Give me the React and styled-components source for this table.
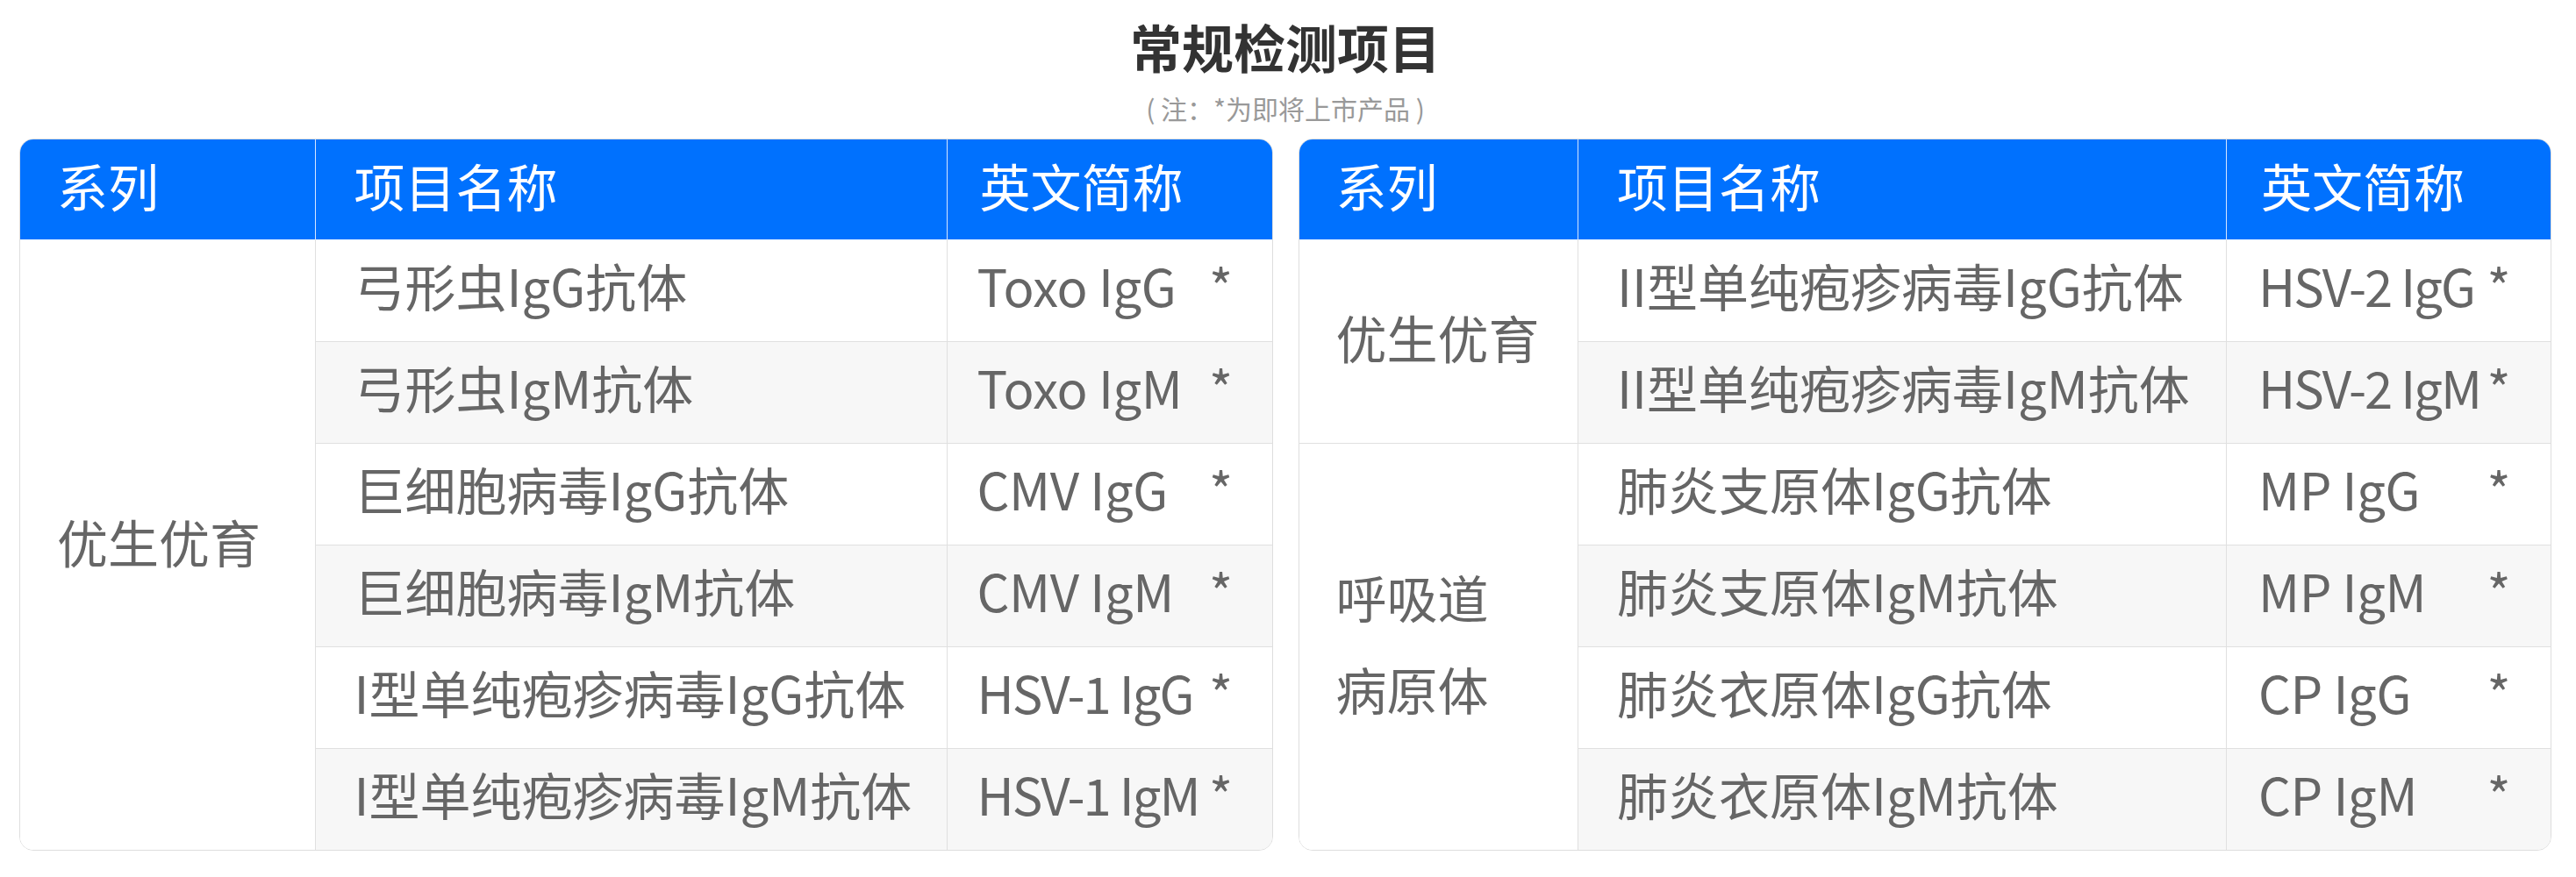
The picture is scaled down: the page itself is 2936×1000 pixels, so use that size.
import React from "react";
import styled, { createGlobalStyle } from "styled-components";

const GlobalStyle = createGlobalStyle`
  html, body {
    margin: 0;
    padding: 0;
    background: #ffffff;
  }
  body {
    font-family: "Noto Sans CJK SC", "Noto Sans", sans-serif;
  }
`;

const Page = styled.div`
  width: 2936px;
  padding: 24px 28px 0 22px;
  box-sizing: border-box;
`;

const Title = styled.h1`
  margin: 0;
  text-align: center;
  font-size: 59px;
  line-height: 58px;
  font-weight: 700;
  color: #333333;
`;

const Note = styled.p`
  margin: 26px 0 0;
  text-align: center;
  font-size: 30px;
  line-height: 30px;
  color: #999999;
`;

const Tables = styled.div`
  margin-top: 20px;
  display: grid;
  grid-template-columns: 1fr 1fr;
  column-gap: 29px;
  align-items: start;
`;

const Card = styled.div`
  border: 1px solid #dedede;
  border-radius: 16px;
  overflow: hidden;
  background: #ffffff;
`;

const Table = styled.table`
  width: 100%;
  border-collapse: collapse;
  table-layout: fixed;
`;

const HeadCell = styled.th`
  height: 114px;
  box-sizing: border-box;
  padding: 0 0 10px ${(p) => p.$pl}px;
  background: #0071fe;
  color: #ffffff;
  font-size: 58px;
  font-weight: 400;
  text-align: left;
  vertical-align: middle;
  border-left: ${(p) => (p.$first ? "none" : "1px solid #d6e6ff")};
`;

const Row = styled.tr`
  background: ${(p) => (p.$alt ? "#f7f7f7" : "#ffffff")};
`;

const Cell = styled.td`
  height: 116px;
  box-sizing: border-box;
  padding: 0 0 12px ${(p) => p.$pl}px;
  font-size: 58px;
  color: #666666;
  vertical-align: middle;
  white-space: nowrap;
  border-top: ${(p) => (p.$top ? "1px solid #e0e0e0" : "none")};
  border-left: ${(p) => (p.$first ? "none" : "1px solid #e0e0e0")};
`;

const SeriesCell = styled.td`
  box-sizing: border-box;
  padding: 0 0 8px 42px;
  font-size: 58px;
  line-height: 105px;
  color: #666666;
  background: #ffffff;
  vertical-align: middle;
  border-top: ${(p) => (p.$top ? "1px solid #e0e0e0" : "none")};
`;

const Abbr = styled.div`
  display: grid;
  grid-template-columns: minmax(0, 1fr) auto;
  align-items: center;
  padding-right: 47px;
`;

const AbbrText = styled.span`
  white-space: nowrap;
  letter-spacing: ${(p) => (p.$tight ? "-2px" : "-0.4px")};
`;

const Star = styled.span`
  font-size: 58px;
`;

const leftRows = [
  ["弓形虫IgG抗体", "Toxo IgG"],
  ["弓形虫IgM抗体", "Toxo IgM"],
  ["巨细胞病毒IgG抗体", "CMV IgG"],
  ["巨细胞病毒IgM抗体", "CMV IgM"],
  ["I型单纯疱疹病毒IgG抗体", "HSV-1 IgG"],
  ["I型单纯疱疹病毒IgM抗体", "HSV-1 IgM"],
];

const leftGroups = [{ name: ["优生优育"], rows: leftRows }];

const rightGroups = [
  {
    name: ["优生优育"],
    rows: [
      ["II型单纯疱疹病毒IgG抗体", "HSV-2 IgG"],
      ["II型单纯疱疹病毒IgM抗体", "HSV-2 IgM"],
    ],
  },
  {
    name: ["呼吸道", "病原体"],
    rows: [
      ["肺炎支原体IgG抗体", "MP IgG"],
      ["肺炎支原体IgM抗体", "MP IgM"],
      ["肺炎衣原体IgG抗体", "CP IgG"],
      ["肺炎衣原体IgM抗体", "CP IgM"],
    ],
  },
];

function ProductTable({ widths, groups, abbrPad }) {
  let index = 0;
  return (
    <Card>
      <Table>
        <colgroup>
          {widths.map((w, i) => (
            <col key={i} style={{ width: w }} />
          ))}
        </colgroup>
        <thead>
          <tr>
            <HeadCell $first $pl={42}>系列</HeadCell>
            <HeadCell $pl={44}>项目名称</HeadCell>
            <HeadCell $pl={abbrPad}>英文简称</HeadCell>
          </tr>
        </thead>
        <tbody>
          {groups.map((g, gi) =>
            g.rows.map((r, ri) => {
              const alt = index % 2 === 1;
              const top = index > 0;
              index += 1;
              return (
                <Row key={`${gi}-${ri}`} $alt={alt}>
                  {ri === 0 && (
                    <SeriesCell rowSpan={g.rows.length} $top={gi > 0}>
                      {g.name.map((n, ni) => (
                        <React.Fragment key={ni}>
                          {ni > 0 && <br />}
                          {n}
                        </React.Fragment>
                      ))}
                    </SeriesCell>
                  )}
                  <Cell $pl={44} $top={top}>{r[0]}</Cell>
                  <Cell $pl={abbrPad - 3} $top={top}>
                    <Abbr>
                      <AbbrText $tight={r[1].startsWith("HSV")}>{r[1]}</AbbrText>
                      <Star>*</Star>
                    </Abbr>
                  </Cell>
                </Row>
              );
            })
          )}
        </tbody>
      </Table>
    </Card>
  );
}

export default function App() {
  return (
    <>
      <GlobalStyle />
      <Page>
        <Title>常规检测项目</Title>
        <Note>( 注：*为即将上市产品 )</Note>
        <Tables>
          <ProductTable widths={["336px", "720px", "373px"]} groups={leftGroups} abbrPad={37} />
          <ProductTable widths={["318px", "739px", "371px"]} groups={rightGroups} abbrPad={39} />
        </Tables>
      </Page>
    </>
  );
}
